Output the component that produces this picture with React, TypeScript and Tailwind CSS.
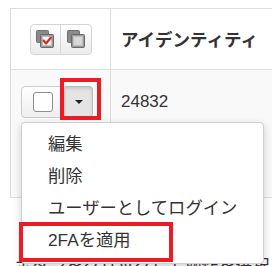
const font = { fontFamily: '"Liberation Sans", "Noto Sans CJK JP", sans-serif' }

function StackIcon({ checked }: { checked: boolean }) {
  return (
    <svg width="18" height="22" viewBox="0 0 18 22">
      <rect x="0.5" y="4.5" width="12" height="12" rx="1" fill="#8a8a8a" stroke="#6f6f6f" />
      <rect x="4.5" y="8.5" width="13" height="13" rx="1" fill="#9a9a9a" stroke="#6a6a6a" />
      <rect x="6.5" y="10.5" width="9" height="9" fill={checked ? '#f4f4f4' : '#d8d8d8'} stroke="#bdbdbd" />
      {checked && (
        <path d="M7.5 14.5 L10 17.5 L15 11.5" fill="none" stroke="#d8241c" strokeWidth="2" strokeLinecap="round" strokeLinejoin="round" />
      )}
    </svg>
  )
}

const menuItems = ['編集', '削除', 'ユーザーとしてログイン', '2FAを適用']

export default function App() {
  return (
    <div className="relative h-[266px] w-[272px] overflow-hidden bg-white pl-[10px] pt-[8px] text-[#333]" style={font}>
      <div className="w-[300px] border-l border-t border-[#dddddd]">
        <div className="flex h-[61px] border-b border-[#dddddd]">
          <div className="flex w-[100px] items-center justify-center border-r border-[#dddddd]">
            <div className="flex h-[31px] overflow-hidden rounded-[4px] border border-[#d4d4d4] bg-gradient-to-b from-white to-[#ececec]">
              <div className="flex w-[30px] items-start justify-center border-r border-[#d8d8d8] pt-[1px]">
                <StackIcon checked />
              </div>
              <div className="flex w-[30px] items-start justify-center pt-[1px]">
                <StackIcon checked={false} />
              </div>
            </div>
          </div>
          <div className="flex items-center pl-[10px] pt-[3px] text-[17.5px] font-bold">アイデンティティ</div>
        </div>
        <div className="flex h-[128px] border-b border-[#dddddd] bg-[#f9f9f9]">
          <div className="w-[100px] border-r border-[#dddddd] pl-[10px] pt-[16px]">
            <div className="flex h-[32px]">
              <div className="flex w-[44px] items-center justify-center rounded-l-[4px] border border-[#cccccc] bg-gradient-to-b from-white to-[#eeeeee]">
                <div className="h-[20px] w-[20px] rounded-[3px] border border-[#8e8e8e] bg-white" />
              </div>
              <div className="flex h-[31px] w-[28px] items-center justify-center rounded-r-[4px] border border-l-0 border-[#bdbdbd] bg-[#e4e4e4] shadow-[inset_0_2px_3px_rgba(0,0,0,0.12)]">
                <div className="h-0 w-0 border-x-[4px] border-t-[4px] border-x-transparent border-t-[#222]" />
              </div>
            </div>
          </div>
          <div className="pl-[10px] pt-[21px] text-[17px] leading-[22px]">24832</div>
        </div>
      </div>
      <div className="mt-[57px] whitespace-nowrap pl-[5px] text-[17px] leading-[24px]">ボタンをクリックして操作を選択します</div>

      <div className="absolute left-[21px] top-[122px] h-[142px] w-[243px] rounded-[4px] border border-[#cfcfcf] bg-white py-[6px] shadow-[0_3px_8px_rgba(0,0,0,0.18)]">
        {menuItems.map((item) => (
          <div key={item} className="flex h-[32px] items-center whitespace-nowrap pl-[26px] text-[17.3px]">
            {item}
          </div>
        ))}
      </div>

      <div className="absolute left-[60px] top-[78px] h-[42px] w-[41px] border-[4px] border-[#ec1c24]" />
      <div className="absolute left-[19px] top-[222px] h-[40px] w-[154px] border-[4px] border-[#ec1c24]" />
    </div>
  )
}
